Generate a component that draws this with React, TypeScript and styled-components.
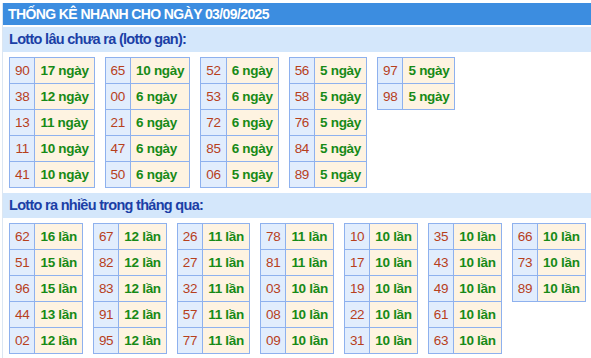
import styled, { createGlobalStyle } from "styled-components";

const GlobalStyle = createGlobalStyle`
  body {
    margin: 0;
    background: #fff;
    font-family: Arial, "Liberation Sans", sans-serif;
  }
`;

const Box = styled.div`
  margin: 3px 0 0 2px;
  border-left: 1px solid #dbe6f2;
`;

const Header = styled.div`
  height: 22px;
  line-height: 23px;
  padding-left: 5px;
  background: #3c8de0;
  color: #fff;
  font-weight: bold;
  font-size: 14px;
  letter-spacing: -0.6px;
  border-bottom: 2px solid #fff;
`;

const SectionTitle = styled.div`
  height: 25px;
  line-height: 25px;
  padding-left: 6px;
  background: #d4e7fb;
  color: #1b3fa6;
  font-weight: bold;
  font-size: 14.5px;
  letter-spacing: -0.7px;
`;

const Tables = styled.div`
  display: flex;
  flex-wrap: wrap;
  align-items: flex-start;
  gap: 10px;
  padding: 5px 0 5px 6px;
`;

const Table = styled.table`
  border-collapse: collapse;
  font-size: 13.5px;
  letter-spacing: -0.3px;
  line-height: 16px;
`;

const Num = styled.td`
  border: 1px solid #8eb1ee;
  background: #e1edfd;
  color: #b7401c;
  height: 25px;
  padding: 0 5px;
  text-align: center;
`;

const Val = styled.td`
  border: 1px solid #8eb1ee;
  background: #fef3e1;
  color: #178a17;
  font-weight: bold;
  height: 25px;
  padding: 0 5px;
`;

type Item = [string, string];

const gan: Item[][] = [
  [["90", "17"], ["38", "12"], ["13", "11"], ["11", "10"], ["41", "10"]],
  [["65", "10"], ["00", "6"], ["21", "6"], ["47", "6"], ["50", "6"]],
  [["52", "6"], ["53", "6"], ["72", "6"], ["85", "6"], ["06", "5"]],
  [["56", "5"], ["58", "5"], ["76", "5"], ["84", "5"], ["89", "5"]],
  [["97", "5"], ["98", "5"]],
];

const nhieu: Item[][] = [
  [["62", "16"], ["51", "15"], ["96", "15"], ["44", "13"], ["02", "12"]],
  [["67", "12"], ["82", "12"], ["83", "12"], ["91", "12"], ["95", "12"]],
  [["26", "11"], ["27", "11"], ["32", "11"], ["57", "11"], ["77", "11"]],
  [["78", "11"], ["81", "11"], ["03", "10"], ["08", "10"], ["09", "10"]],
  [["10", "10"], ["17", "10"], ["19", "10"], ["22", "10"], ["31", "10"]],
  [["35", "10"], ["43", "10"], ["49", "10"], ["61", "10"], ["63", "10"]],
  [["66", "10"], ["73", "10"], ["89", "10"]],
];

const Group = ({ data, unit }: { data: Item[][]; unit: string }) => (
  <Tables>
    {data.map((t, i) => (
      <Table key={i}>
        <tbody>
          {t.map(([n, c]) => (
            <tr key={n}>
              <Num>{n}</Num>
              <Val>
                {c} {unit}
              </Val>
            </tr>
          ))}
        </tbody>
      </Table>
    ))}
  </Tables>
);

export default function App() {
  return (
    <>
      <GlobalStyle />
      <Box>
        <Header>THỐNG KÊ NHANH CHO NGÀY 03/09/2025</Header>
        <SectionTitle>Lotto lâu chưa ra (lotto gan):</SectionTitle>
        <Group data={gan} unit="ngày" />
        <SectionTitle>Lotto ra nhiều trong tháng qua:</SectionTitle>
        <Group data={nhieu} unit="lần" />
      </Box>
    </>
  );
}
